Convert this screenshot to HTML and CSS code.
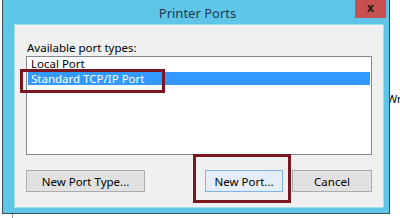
FILE: index.html
```html
<!DOCTYPE html>
<html>
<head>
<meta charset="utf-8">
<link rel="stylesheet" href="styles.css">
</head>
<body>
<div class="stage">
  <span class="behind-text">Wri</span>
  <span class="behind-line"></span>
  <div class="window">
    <div class="titlebar">
      <span class="title">Printer Ports</span>
      <span class="close">x</span>
    </div>
    <div class="client">
      <div class="label">Available port types:</div>
      <div class="listbox">
        <div class="item first">Local Port</div>
        <div class="item selected">Standard TCP/IP Port</div>
      </div>
      <div class="buttons">
        <button class="btn btn-type">New Port Type...</button>
        <span class="spacer"></span>
        <button class="btn btn-new">New Port...</button>
        <button class="btn btn-cancel">Cancel</button>
      </div>
    </div>
  </div>
  <div class="mark mark-item"></div>
  <div class="mark mark-button"></div>
</div>
</body>
</html>
```
FILE: styles.css
```css
html, body {
  margin: 0;
  padding: 0;
  background: #ffffff;
}
.stage {
  position: relative;
  width: 400px;
  height: 218px;
  overflow: hidden;
  font-family: "Noto Sans", "Open Sans", sans-serif;
  font-size: 11.5px;
  color: #000;
}
.behind-text {
  position: absolute;
  left: 387px;
  top: 91px;
  font-size: 11px;
}
.behind-line {
  position: absolute;
  left: 12px;
  top: 214px;
  width: 1px;
  height: 4px;
  background: #9a9a9a;
}
.window {
  position: relative;
  margin-left: 2px;
  width: 386px;
  height: 213px;
  border-left: 1px solid #3b4a55;
  border-right: 1px solid #3b4a55;
  border-bottom: 1px solid #3b4a55;
  background: #5fc6e8;
  display: flex;
  flex-direction: column;
}
.titlebar {
  height: 25px;
  display: flex;
  justify-content: center;
  align-items: flex-start;
  position: relative;
}
.title {
  margin-top: 4px;
  margin-left: 3px;
  font-size: 13px;
  color: #1c3a57;
}
.close {
  position: absolute;
  right: 3px;
  top: 0;
  width: 31px;
  height: 18px;
  background: #c75050;
  color: #1a1a1a;
  font-weight: bold;
  font-size: 12px;
  line-height: 16px;
  text-align: center;
}
.client {
  margin-left: 12px;
  margin-right: 6px;
  height: 182px;
  background: #f0f0f0;
  box-shadow: 0 0 0 1px #9fdcef;
  padding: 14px 11px 0 11px;
  box-sizing: border-box;
}
.label {
  height: 17px;
  line-height: 17px;
  margin-left: 1px;
}
.listbox {
  height: 97px;
  border: 1px solid #828790;
  background: #ffffff;
  overflow: hidden;
  padding: 0 1px;
}
.item {
  height: 13px;
  line-height: 13px;
  padding-left: 3px;
  white-space: nowrap;
}
.item.first {
  height: 15px;
  line-height: 14px;
}
.item.selected {
  background: #3399ff;
  color: #ffffff;
}
.buttons {
  display: flex;
  margin-top: 15px;
  gap: 9px;
}
.spacer {
  flex: 1;
}
.btn {
  height: 22px;
  border: 1px solid #acacac;
  background: #e1e1e1;
  font-family: inherit;
  font-size: 11.5px;
  color: #000;
  padding: 0;
  margin: 0;
}
.btn-type {
  width: 119px;
}
.btn-new {
  width: 78px;
  border-color: #7eb4ea;
  background: #e5eef8;
}
.btn-cancel {
  width: 80px;
}
.mark {
  position: absolute;
  border: 3px solid #7a1621;
  box-sizing: border-box;
}
.mark-item {
  left: 20px;
  top: 69px;
  width: 145px;
  height: 24px;
}
.mark-button {
  left: 193px;
  top: 154px;
  width: 98px;
  height: 49px;
}
```
